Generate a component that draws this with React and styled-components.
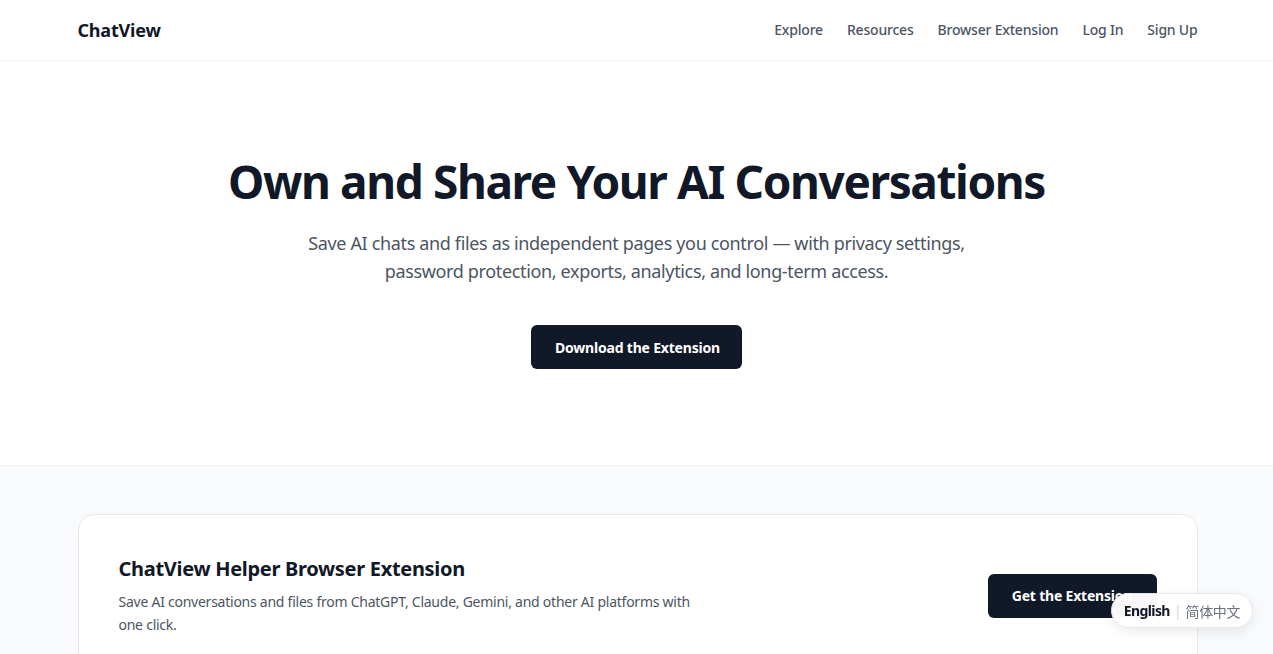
import React from "react";
import styled, { createGlobalStyle } from "styled-components";

const Global = createGlobalStyle`
  * { box-sizing: border-box; }
  html, body { margin: 0; padding: 0; background: #ffffff; }
  body {
    font-family: "Noto Sans", "Open Sans", sans-serif;
    color: #111827;
    -webkit-font-smoothing: antialiased;
  }
  button { font-family: inherit; }
`;

const Header = styled.header`
  height: 61px;
  border-bottom: 1px solid #f3f4f6;
  background: #ffffff;
`;

const Container = styled.div`
  max-width: 1152px;
  margin: 0 auto;
  padding: 0 15px 0 17px;
  height: 100%;
`;

const HeaderInner = styled(Container)`
  display: flex;
  align-items: center;
  justify-content: space-between;
  padding-bottom: 1px;
`;

const Logo = styled.a`
  font-size: 18px;
  font-weight: 700;
  color: #111827;
  text-decoration: none;
  letter-spacing: -0.2px;
`;

const Nav = styled.nav`
  display: flex;
  align-items: center;
  gap: 24px;
`;

const NavLink = styled.a`
  font-size: 14px;
  font-weight: 500;
  color: #4b5563;
  text-decoration: none;
  letter-spacing: -0.2px;
`;

const Hero = styled.section`
  padding: 96px 16px;
  text-align: center;
  background: #ffffff;
`;

const Title = styled.h1`
  margin: 0;
  font-size: 46px;
  line-height: 48px;
  font-weight: 700;
  color: #111827;
  letter-spacing: -1.4px;
`;

const Subtitle = styled.p`
  margin: 24px auto 0;
  max-width: 700px;
  font-size: 18px;
  line-height: 28px;
  color: #4b5563;
  letter-spacing: -0.35px;
`;

const PrimaryButton = styled.button`
  border: none;
  background: #111827;
  color: #ffffff;
  font-size: 14px;
  font-weight: 700;
  height: 44px;
  padding: 0 24px;
  border-radius: 6px;
  cursor: pointer;
  letter-spacing: -0.2px;
  white-space: nowrap;
`;

const HeroButton = styled(PrimaryButton)`
  margin-top: 40px;
  width: 211px;
`;

const FeatureSection = styled.section`
  background: #f9fafb;
  border-top: 1px solid #f3f4f6;
  padding: 48px 0 48px;
`;

const Card = styled.div`
  background: #ffffff;
  border: 1px solid #e5e7eb;
  border-radius: 16px;
  padding: 40px;
  display: flex;
  align-items: center;
  justify-content: space-between;
  gap: 32px;
`;

const CardText = styled.div`
  max-width: 590px;
`;

const CardTitle = styled.h2`
  margin: 0;
  font-size: 20px;
  line-height: 28px;
  font-weight: 700;
  color: #111827;
  letter-spacing: -0.3px;
`;

const CardDesc = styled.p`
  margin: 7px 0 0;
  font-size: 14px;
  line-height: 23px;
  color: #4b5563;
  letter-spacing: -0.25px;
`;

const CardButton = styled(PrimaryButton)`
  width: 169px;
  padding: 0;
`;

const LangSwitch = styled.div`
  position: fixed;
  right: 20px;
  bottom: 26px;
  height: 35px;
  padding: 0 12px 0 12px;
  display: flex;
  align-items: center;
  gap: 4px;
  background: rgba(255, 255, 255, 0.97);
  border: 1px solid #e5e7eb;
  border-radius: 999px;
  box-shadow: 0 4px 12px rgba(0, 0, 0, 0.08);
  font-size: 14px;
`;

const LangOption = styled.span`
  font-weight: ${(p) => (p.$active ? 700 : 400)};
  color: ${(p) => (p.$active ? "#111827" : "#6b7280")};
  font-family: "Noto Sans", "Noto Sans CJK SC", sans-serif;
  letter-spacing: ${(p) => (p.$active ? "-0.6px" : "-0.4px")};
`;

const Divider = styled.span`
  color: #d1d5db;
`;

export default function App() {
  return (
    <>
      <Global />
      <Header>
        <HeaderInner>
          <Logo href="#">ChatView</Logo>
          <Nav>
            <NavLink href="#">Explore</NavLink>
            <NavLink href="#">Resources</NavLink>
            <NavLink href="#">Browser Extension</NavLink>
            <NavLink href="#">Log In</NavLink>
            <NavLink href="#">Sign Up</NavLink>
          </Nav>
        </HeaderInner>
      </Header>
      <Hero>
        <Title>Own and Share Your AI Conversations</Title>
        <Subtitle>
          Save AI chats and files as independent pages you control — with privacy settings,
          <br />
          password protection, exports, analytics, and long-term access.
        </Subtitle>
        <HeroButton>Download the Extension</HeroButton>
      </Hero>
      <FeatureSection>
        <Container>
          <Card>
            <CardText>
              <CardTitle>ChatView Helper Browser Extension</CardTitle>
              <CardDesc>
                Save AI conversations and files from ChatGPT, Claude, Gemini, and other AI platforms with one click.
              </CardDesc>
            </CardText>
            <CardButton>Get the Extension</CardButton>
          </Card>
        </Container>
      </FeatureSection>
      <LangSwitch>
        <LangOption $active>English</LangOption>
        <Divider>|</Divider>
        <LangOption>简体中文</LangOption>
      </LangSwitch>
    </>
  );
}
